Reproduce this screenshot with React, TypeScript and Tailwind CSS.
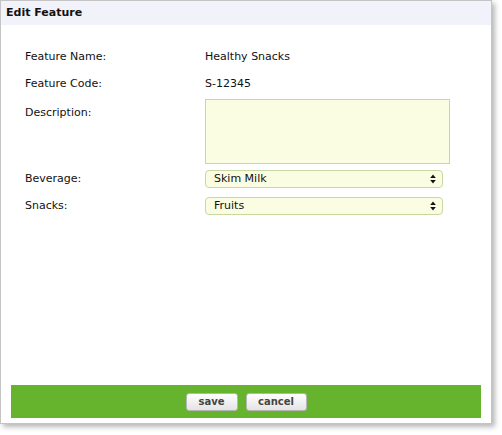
import React from 'react'

function Arrows() {
  return (
    <svg width="6" height="10" viewBox="0 0 6 10" className="shrink-0">
      <path d="M3 0.5 L5.8 4 L0.2 4 Z" fill="#111" />
      <path d="M3 9.5 L5.8 6 L0.2 6 Z" fill="#111" />
    </svg>
  )
}

function FakeSelect({ value }: { value: string }) {
  return (
    <div className="w-[238px] h-[18px] flex items-center justify-between pl-[8px] pr-[6px] bg-[#fbfde2] border border-[#c7d8a0] rounded-[4px] text-[11px] text-[#111]">
      <span>{value}</span>
      <Arrows />
    </div>
  )
}

export default function App() {
  return (
    <div className="w-[502px] h-[435px] bg-white" style={{ fontFamily: '"DejaVu Sans", Verdana, sans-serif' }}>
      <div className="w-[492px] h-[424px] border border-[#c4c4c4] bg-white flex flex-col shadow-[3px_3px_5px_rgba(0,0,0,0.28)]">
        <div className="h-[24px] bg-[#f2f2fb] px-[5px] flex items-center">
          <h2 className="text-[11px] font-bold text-[#111]">Edit Feature</h2>
        </div>

        <div className="pl-[24px] pt-[22px] text-[11px] text-[#111]">
          <div className="flex items-center h-[20px]">
            <span className="w-[180px]">Feature Name:</span>
            <span>Healthy Snacks</span>
          </div>
          <div className="flex items-center h-[20px] mt-[7px]">
            <span className="w-[180px]">Feature Code:</span>
            <span>S-12345</span>
          </div>
          <div className="flex mt-[5px]">
            <span className="w-[180px] pt-[4px] leading-[20px]">Description:</span>
            <textarea className="w-[245px] h-[65px] bg-[#fbfde2] border border-[#c7d8a0] resize-none outline-none" />
          </div>
          <div className="flex items-center mt-[6px]">
            <span className="w-[180px]">Beverage:</span>
            <FakeSelect value="Skim Milk" />
          </div>
          <div className="flex items-center mt-[9px]">
            <span className="w-[180px]">Snacks:</span>
            <FakeSelect value="Fruits" />
          </div>
        </div>

        <div className="mt-auto mb-[5px] mx-[10px] h-[33px] bg-[#66b32e] flex items-center justify-center gap-[8px]">
          <button className="w-[52px] h-[18px] rounded-[3px] border border-[#b5b5b5] bg-gradient-to-b from-white to-[#e4e4e4] text-[10px] font-bold text-[#444]">
            save
          </button>
          <button className="w-[61px] h-[18px] rounded-[3px] border border-[#b5b5b5] bg-gradient-to-b from-white to-[#e4e4e4] text-[10px] font-bold text-[#444]">
            cancel
          </button>
        </div>
      </div>
    </div>
  )
}
